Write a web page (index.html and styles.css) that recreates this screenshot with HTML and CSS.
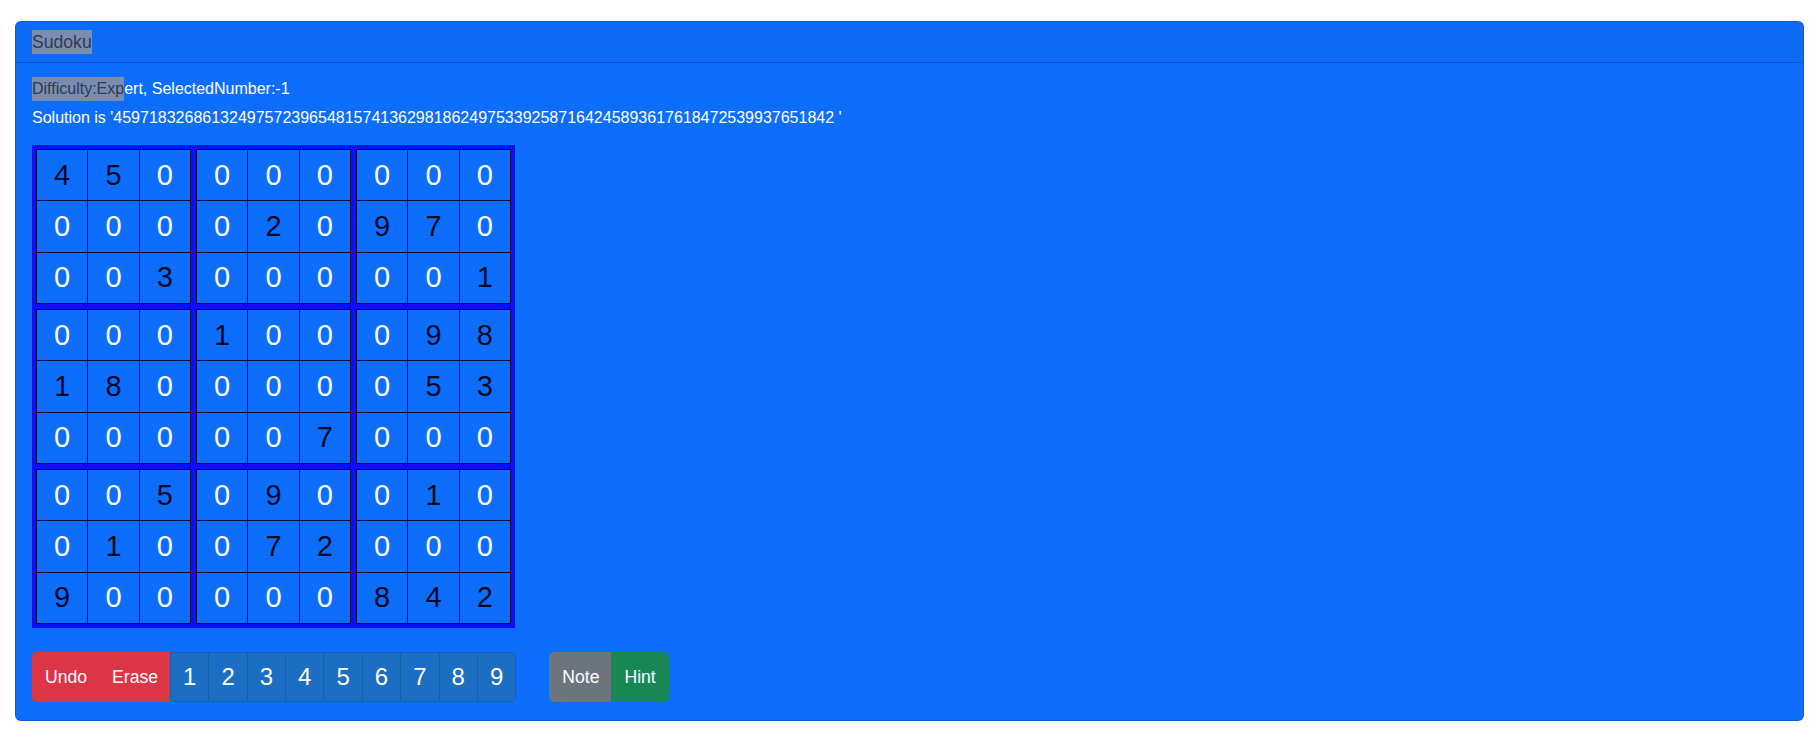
FILE: index.html
```html
<!DOCTYPE html>
<html lang="en">
<head>
<meta charset="utf-8">
<title>Sudoku</title>
<link rel="stylesheet" href="styles.css">
</head>
<body>
<div class="page">
  <div class="card">
    <div class="card-header"><span class="sel hdr">Sudoku</span></div>
    <div class="card-body">
      <div class="line"><span class="sel">Difficulty:Exp</span>ert, SelectedNumber:-1</div>
      <div class="line">Solution is '459718326861324975723965481574136298186249753392587164245893617618472539937651842 '</div>
      <div class="board">
        <div class="box">
          <div class="cell given">4</div><div class="cell given">5</div><div class="cell">0</div>
          <div class="cell">0</div><div class="cell">0</div><div class="cell">0</div>
          <div class="cell">0</div><div class="cell">0</div><div class="cell given">3</div>
        </div>
        <div class="box">
          <div class="cell">0</div><div class="cell">0</div><div class="cell">0</div>
          <div class="cell">0</div><div class="cell given">2</div><div class="cell">0</div>
          <div class="cell">0</div><div class="cell">0</div><div class="cell">0</div>
        </div>
        <div class="box">
          <div class="cell">0</div><div class="cell">0</div><div class="cell">0</div>
          <div class="cell given">9</div><div class="cell given">7</div><div class="cell">0</div>
          <div class="cell">0</div><div class="cell">0</div><div class="cell given">1</div>
        </div>
        <div class="box">
          <div class="cell">0</div><div class="cell">0</div><div class="cell">0</div>
          <div class="cell given">1</div><div class="cell given">8</div><div class="cell">0</div>
          <div class="cell">0</div><div class="cell">0</div><div class="cell">0</div>
        </div>
        <div class="box">
          <div class="cell given">1</div><div class="cell">0</div><div class="cell">0</div>
          <div class="cell">0</div><div class="cell">0</div><div class="cell">0</div>
          <div class="cell">0</div><div class="cell">0</div><div class="cell given">7</div>
        </div>
        <div class="box">
          <div class="cell">0</div><div class="cell given">9</div><div class="cell given">8</div>
          <div class="cell">0</div><div class="cell given">5</div><div class="cell given">3</div>
          <div class="cell">0</div><div class="cell">0</div><div class="cell">0</div>
        </div>
        <div class="box">
          <div class="cell">0</div><div class="cell">0</div><div class="cell given">5</div>
          <div class="cell">0</div><div class="cell given">1</div><div class="cell">0</div>
          <div class="cell given">9</div><div class="cell">0</div><div class="cell">0</div>
        </div>
        <div class="box">
          <div class="cell">0</div><div class="cell given">9</div><div class="cell">0</div>
          <div class="cell">0</div><div class="cell given">7</div><div class="cell given">2</div>
          <div class="cell">0</div><div class="cell">0</div><div class="cell">0</div>
        </div>
        <div class="box">
          <div class="cell">0</div><div class="cell given">1</div><div class="cell">0</div>
          <div class="cell">0</div><div class="cell">0</div><div class="cell">0</div>
          <div class="cell given">8</div><div class="cell given">4</div><div class="cell given">2</div>
        </div>
      </div>
      <div class="toolbar">
        <div class="btn-group">
          <button class="btn btn-danger">Undo</button>
          <button class="btn btn-danger">Erase</button>
          <button class="btn btn-primary num">1</button>
          <button class="btn btn-primary num">2</button>
          <button class="btn btn-primary num">3</button>
          <button class="btn btn-primary num">4</button>
          <button class="btn btn-primary num">5</button>
          <button class="btn btn-primary num">6</button>
          <button class="btn btn-primary num">7</button>
          <button class="btn btn-primary num">8</button>
          <button class="btn btn-primary num">9</button>
        </div>
        <div class="btn-group">
          <button class="btn btn-secondary">Note</button>
          <button class="btn btn-success">Hint</button>
        </div>
      </div>
    </div>
  </div>
</div>
</body>
</html>
```
FILE: styles.css
```css
* { box-sizing: border-box; }
html, body { margin: 0; padding: 0; background: #fff; }
body {
  font-family: "Liberation Sans", Arial, sans-serif;
  font-size: 16px;
  color: #fff;
}
.page { padding: 21px 12px 0 15px; }
.card {
  background: #0d6efd;
  border: 1px solid rgba(0, 0, 0, 0.175);
  border-radius: 6px;
  overflow: hidden;
}
.card-header {
  padding: 8px 16px 8px;
  background: rgba(33, 37, 41, 0.03);
  border-bottom: 1px solid rgba(0, 0, 0, 0.175);
  line-height: 24px;
  font-size: 17.6px;
}
.sel {
  display: inline-block;
  background: #7a8db0;
  color: #2f3a52;
  line-height: 24px;
}
.card-body { padding: 14px 16px 18px; }
.line { line-height: 24px; margin-bottom: 5px; white-space: nowrap; }
.board {
  margin-top: 15px;
  display: grid;
  grid-template-columns: repeat(3, max-content);
  gap: 1px;
  width: max-content;
  background: #0a10f2;
  border: 2px solid #0a10f2;
}
.box {
  display: grid;
  grid-template-columns: repeat(3, 50.33px);
  grid-auto-rows: 50.33px;
  gap: 1px;
  padding: 1px;
  background: #050a3a;
  border: 2px solid #0a10f2;
}
.cell {
  background: #0d6efd;
  display: flex;
  align-items: center;
  justify-content: center;
  font-size: 29px;
  color: #fff;
}
.cell.given { color: #020824; }
.toolbar {
  margin-top: 24px;
  display: flex;
  gap: 33px;
}
.btn-group { display: flex; }
.btn {
  font-family: "Liberation Sans", Arial, sans-serif;
  font-size: 17.6px;
  line-height: 26px;
  padding: 11px 12px;
  border: 1px solid transparent;
  color: #fff;
  margin: 0;
  border-radius: 0;
}
.btn + .btn { margin-left: -1px; }
.btn-group .btn:first-child { border-radius: 5px 0 0 5px; }
.btn-group .btn:last-child { border-radius: 0 5px 5px 0; }
.num { font-size: 24px; padding: 11px 12px; }
.btn-danger { background: #dc3545; border-color: #dc3545; }
.btn-primary { background: #1b6ec2; border-color: #1861ac; }
.btn-secondary { background: #6c757d; border-color: #6c757d; }
.btn-success { background: #198754; border-color: #198754; }
```
